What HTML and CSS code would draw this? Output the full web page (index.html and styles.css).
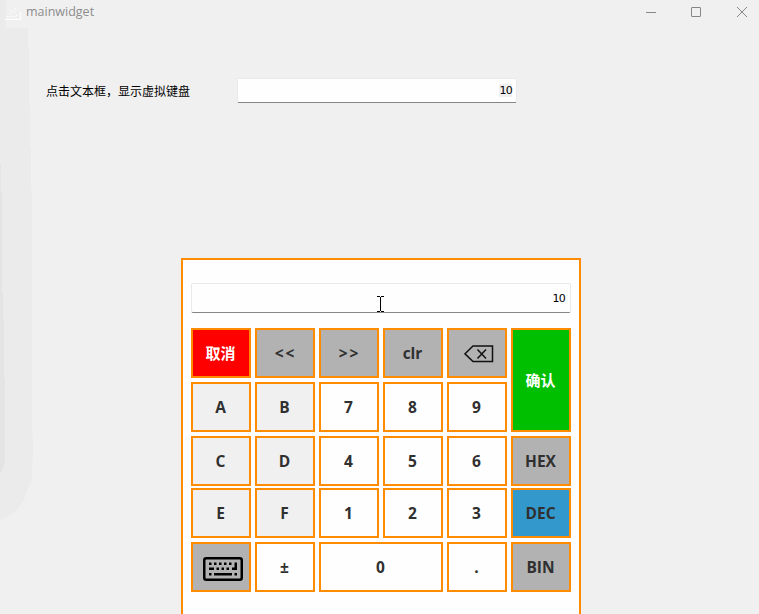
FILE: index.html
```html
<!DOCTYPE html>
<html lang="zh-CN">
<head>
<meta charset="utf-8">
<title>mainwidget</title>
<link rel="stylesheet" href="styles.css">
</head>
<body>
<svg class="shade" width="40" height="600" viewBox="0 0 40 600">
  <path fill="#ebebeb" d="M0 0H6V28H28V48H29V105H30V148H31V191H32V434H33V462H32V480L27 490L24 500L16 511L8 516L0 520Z"/>
  <path fill="#e4e4e4" d="M0 164H1V192H2V292H3V320H4V378H5V460L3 469L0 474Z"/>
</svg>
<header class="titlebar">
  <svg class="app-icon" width="16" height="12" viewBox="0 0 16 12" fill="none" stroke="#fff">
    <path d="M0 11.500H15.500V4"/>
    <path d="M2 8.500H12M5 5.500H7M9.500 2V6M11 7.500H13M6 2.500H7M10.500 0V1" stroke-dasharray="1 1"/>
  </svg>
  <span class="title">mainwidget</span>
  <svg class="controls" width="103" height="12" viewBox="0 0 103 12" fill="none" stroke="#878787">
    <path d="M0 6.5H10"/>
    <rect x="45.5" y="1.5" width="9" height="9" rx=".5"/>
    <path d="M91 1L101 11M101 1L91 11"/>
  </svg>
</header>
<main>
  <div class="form-row">
    <label class="caption">点击文本框，显示虚拟键盘</label>
    <div class="field"><span class="value selected">10</span></div>
  </div>
  <section class="keyboard">
    <div class="field display"><span class="value">10</span></div>
    <div class="keys">
      <div class="key cancel">取消</div>
      <div class="key gray arrows">&lt;&lt;</div>
      <div class="key gray arrows">&gt;&gt;</div>
      <div class="key gray">clr</div>
      <div class="key gray">
        <svg class="backspace" width="30" height="18" viewBox="0 0 30 18" fill="none" stroke="#111" stroke-width="1.5">
          <path d="M9 1H28.500V16.500H9L1 8.800ZM13.500 4.500L22 13.500M22 4.500L13.500 13.500"/>
        </svg>
      </div>
      <div class="key confirm">确认</div>
      <div class="key hex">A</div>
      <div class="key hex">B</div>
      <div class="key">7</div>
      <div class="key">8</div>
      <div class="key">9</div>
      <div class="key hex">C</div>
      <div class="key hex">D</div>
      <div class="key">4</div>
      <div class="key">5</div>
      <div class="key">6</div>
      <div class="key gray">HEX</div>
      <div class="key hex up">E</div>
      <div class="key hex up">F</div>
      <div class="key up">1</div>
      <div class="key up">2</div>
      <div class="key up">3</div>
      <div class="key blue up">DEC</div>
      <div class="key gray">
        <svg class="keyboard-icon" width="40" height="24" viewBox="0 0 40 24">
          <rect x="1.250" y="1.250" width="37.500" height="21.500" rx="2" fill="none" stroke="#000" stroke-width="2.500"/>
          <path d="M6 5.500h2.500v2.500H6zM11 5.500h2.500v2.500H11zM16 5.500h2.500v2.500H16zM21 5.500h2.500v2.500H21zM26 5.500h2.500v2.500H26zM31.500 5.500H34V13H29v-2.500H31.500zM6 10.500h5V13H6zM13.500 10.500H16V13h-2.500zM18.500 10.500H21V13h-2.500zM23.500 10.500H26V13h-2.500zM6 16h2.500v2.500H6zM11 16h18v2.500H11zM31.500 16H34v2.500h-2.500z"/>
        </svg>
      </div>
      <div class="key">±</div>
      <div class="key zero">0</div>
      <div class="key">.</div>
      <div class="key gray">BIN</div>
    </div>
  </section>
</main>
<svg class="cursor" width="7" height="16" viewBox="0 0 7 16" fill="none" stroke="#000">
  <path d="M0 .5H3M4 .5H7M3.500 1V15M0 15.500H3M4 15.500H7"/>
</svg>
</body>
</html>
```
FILE: styles.css
```css
* { box-sizing: border-box; }
body {
  margin: 0;
  height: 614px;
  overflow: hidden;
  background: #f0f0f0;
  font-family: "Open Sans", "Noto Sans CJK SC", sans-serif;
}
.shade { position: absolute; left: 0; top: 0; z-index: -1; }
.titlebar {
  display: flex;
  align-items: center;
  height: 24px;
  padding: 0 10px 0 5px;
}
.app-icon { margin-top: 4px; }
.title {
  margin-left: 5px;
  color: #8c8c8c;
  font-size: 12.5px;
  line-height: 24px;
}
.controls { margin-left: auto; }
.form-row {
  display: flex;
  align-items: center;
  height: 25px;
  margin: 54px 0 0 46px;
}
.caption {
  width: 191px;
  font: 12px/24px "Noto Sans CJK SC", sans-serif;
  color: #000;
}
.field {
  display: flex;
  align-items: center;
  justify-content: flex-end;
  width: 280px;
  height: 25px;
  padding-right: 4px;
  border: 1px solid #e9e9e9;
  border-bottom-color: #868686;
  border-radius: 2px;
  background: #fefefe;
}
.value {
  padding-top: 1px;
  font: 11px/12px "DejaVu Sans", sans-serif;
  letter-spacing: -.7px;
  color: #000;
}
.selected { background: #f0f0f0; }
.keyboard {
  width: 400px;
  height: 380px;
  margin: 155px 0 0 181px;
  padding: 23px 8px;
  border: 2px solid #ff8c00;
  background: #fefefe;
}
.display { width: 380px; height: 30px; padding-top: 1px; padding-right: 5px; }
.keys {
  display: grid;
  grid-template-columns: repeat(6, 60px);
  grid-template-rows: 50px 50px 50px 48px 50px;
  gap: 4px;
  margin-top: 15px;
}
.key {
  display: flex;
  align-items: center;
  justify-content: center;
  padding-right: 1px;
  border: 2px solid #ff8c00;
  background: #fefefe;
  color: #303030;
  font-size: 15.5px;
  font-weight: 700;
  line-height: 20px;
}
.up { height: 50px; margin-top: -2px; }
.gray { background: #b2b2b2; }
.hex { background: #f0f0f0; }
.blue { background: #3399cc; }
.cancel { background: #f00; color: #fff; font-size: 15px; }
.confirm { grid-row: span 2; background: #00bf00; color: #fff; font-size: 15px; }
.zero { grid-column: span 2; }
.arrows { padding: 0 0 0 1px; letter-spacing: 2px; }
.backspace { margin: 2px 0 0 4px; }
.keyboard-icon { margin: 3px 0 0 5px; }
.cursor { position: absolute; left: 377px; top: 296px; }
```
